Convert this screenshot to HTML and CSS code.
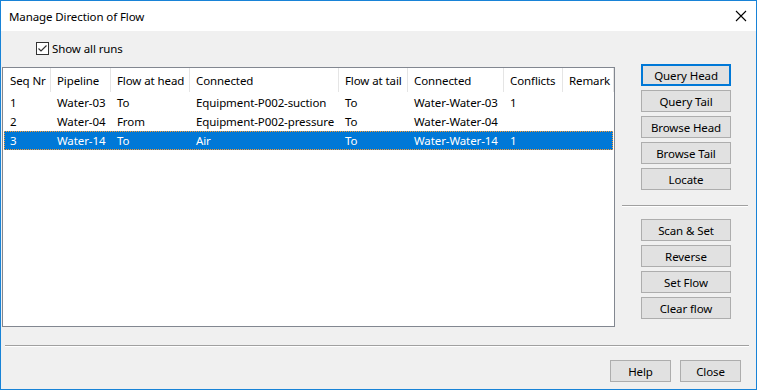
FILE: index.html
```html
<!DOCTYPE html>
<html lang="en">

<head>
  <meta charset="UTF-8">
  <title>Manage Direction of Flow</title>
  <link rel="stylesheet" href="styles.css">
</head>

<body>
  <div class="window">
    <!-- Title bar -->
    <div class="titlebar">
      <span class="title">Manage Direction of Flow</span>
      <svg class="close-icon" width="12" height="12" viewBox="0 0 12 12">
        <path d="M1 1 L11 11 M11 1 L1 11" stroke="#000" stroke-width="1.1" fill="none" />
      </svg>
    </div>

    <div class="content">
      <div class="left">
        <label class="checkbox-row">
          <span class="checkbox">
            <svg width="11" height="11" viewBox="0 0 11 11">
              <path d="M1.5 5.5 L4 8 L9.5 2.5" stroke="#333" stroke-width="1.2" fill="none" />
            </svg>
          </span>
          Show all runs
        </label>

        <!-- Runs list -->
        <div class="listbox">
          <div class="row header">
            <div class="cell">Seq Nr</div>
            <div class="cell">Pipeline</div>
            <div class="cell">Flow at head</div>
            <div class="cell">Connected</div>
            <div class="cell">Flow at tail</div>
            <div class="cell">Connected</div>
            <div class="cell">Conflicts</div>
            <div class="cell">Remark</div>
          </div>
          <div class="row">
            <div class="cell">1</div>
            <div class="cell">Water-03</div>
            <div class="cell">To</div>
            <div class="cell">Equipment-P002-suction</div>
            <div class="cell">To</div>
            <div class="cell">Water-Water-03</div>
            <div class="cell">1</div>
            <div class="cell"></div>
          </div>
          <div class="row">
            <div class="cell">2</div>
            <div class="cell">Water-04</div>
            <div class="cell">From</div>
            <div class="cell">Equipment-P002-pressure</div>
            <div class="cell">To</div>
            <div class="cell">Water-Water-04</div>
            <div class="cell"></div>
            <div class="cell"></div>
          </div>
          <div class="row selected">
            <div class="cell">3</div>
            <div class="cell">Water-14</div>
            <div class="cell">To</div>
            <div class="cell">Air</div>
            <div class="cell">To</div>
            <div class="cell">Water-Water-14</div>
            <div class="cell">1</div>
            <div class="cell"></div>
          </div>
        </div>
      </div>

      <div class="right">
        <div class="btn-group">
          <button class="btn default">Query Head</button>
          <button class="btn">Query Tail</button>
          <button class="btn">Browse Head</button>
          <button class="btn">Browse Tail</button>
          <button class="btn">Locate</button>
        </div>
        <div class="separator side"></div>
        <div class="btn-group">
          <button class="btn">Scan &amp; Set</button>
          <button class="btn">Reverse</button>
          <button class="btn">Set Flow</button>
          <button class="btn">Clear flow</button>
        </div>
      </div>
    </div>

    <div class="separator bottom"></div>

    <div class="footer">
      <button class="btn small">Help</button>
      <button class="btn small">Close</button>
    </div>
  </div>
</body>

</html>
```

FILE: styles.css
```css
* {
  box-sizing: border-box;
}

body {
  margin: 0;
  font-family: 'Noto Sans', sans-serif;
  font-size: 11.5px;
  letter-spacing: -0.1px;
  color: #000;
  background-color: #fff;
}

.window {
  width: 757px;
  height: 390px;
  border: 1px solid #1883d7;
  background-color: #f0f0f0;
  display: flex;
  flex-direction: column;
}

.titlebar {
  height: 30px;
  background-color: #fff;
  display: flex;
  align-items: center;
  justify-content: space-between;
  padding: 0 9px 0 8px;
  flex-shrink: 0;
}

.close-icon {
  display: block;
}

.content {
  display: flex;
}

.left {
  width: 614px;
  padding-left: 1px;
}

.checkbox-row {
  display: flex;
  align-items: center;
  height: 14px;
  margin: 10px 0 0 34px;
  gap: 3px;
}

.checkbox {
  width: 13px;
  height: 13px;
  border: 1px solid #333;
  background-color: #fff;
  display: flex;
  align-items: center;
  justify-content: center;
}

.checkbox svg {
  display: block;
}

.listbox {
  margin-top: 12px;
  width: 613px;
  height: 260px;
  border: 1px solid #828790;
  background-color: #fff;
  padding: 0 1px;
}

.row {
  display: grid;
  grid-template-columns: 47px 60px 79px 149px 69px 96px 59px 51px;
  height: 19px;
  align-items: center;
  white-space: nowrap;
}

.row.header {
  height: 25px;
  align-items: stretch;
}

.header .cell {
  border-right: 1px solid #e5e5e5;
  display: flex;
  align-items: center;
  margin-bottom: 1px;
}

.cell {
  padding-left: 6px;
  overflow: hidden;
}

.row.selected {
  background-color: #0078d7;
  color: #fff;
  outline: 1px dotted #ff9a2e;
  outline-offset: -1px;
}

.right {
  width: 140px;
  padding-top: 33px;
}

.btn-group {
  display: flex;
  flex-direction: column;
  gap: 4px;
  padding-left: 26px;
}

.btn {
  width: 90px;
  height: 22px;
  border: 1px solid #adadad;
  background-color: #e1e1e1;
  font-family: 'Noto Sans', sans-serif;
  font-size: 11.5px;
  letter-spacing: -0.1px;
  color: #000;
  padding: 0;
}

.btn.default {
  border: 2px solid #0078d7;
}

.separator {
  height: 2px;
  border-top: 1px solid #a0a0a0;
  border-bottom: 1px solid #fff;
}

.separator.side {
  margin: 15px 7px 12px 7px;
}

.separator.bottom {
  margin: 18px 7px 0 4px;
}

.footer {
  display: flex;
  justify-content: flex-end;
  gap: 9px;
  padding: 13px 15px 0 0;
}

.btn.small {
  width: 61px;
}
```
